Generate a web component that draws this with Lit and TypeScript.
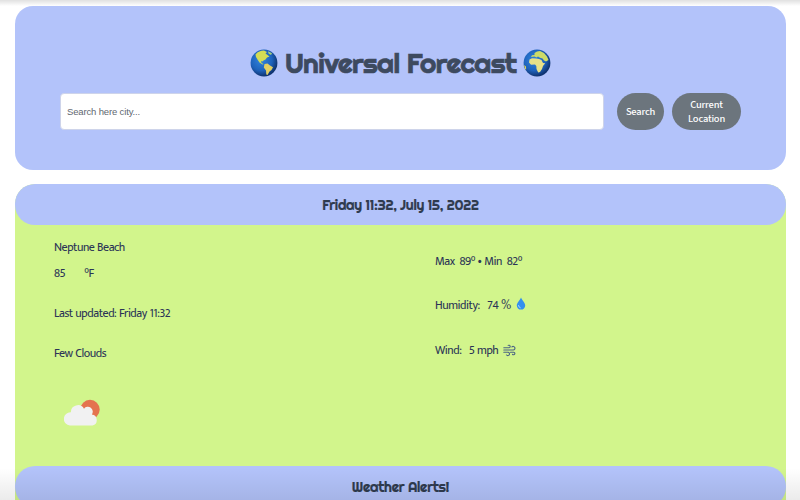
import { LitElement, html, css, svg } from "lit";
import { customElement, property } from "lit/decorators.js";

@customElement("globe-icon")
class GlobeIcon extends LitElement {
  @property() side = "americas";
  static styles = css`
    :host { display: block; width: 28px; height: 28px; flex: none; }
    svg { display: block; }
  `;
  render() {
    const americas = svg`
      <path fill="#d3dc55" d="M5.500 5.500C8 2.500 11 1.500 14 1.600L17 3L15.500 4.500L17.500 6L19.500 7.500L17 8.500L15.500 10.500L13.500 11.500L12.500 12.500L11 12L11.500 14L13.500 15L12.500 15.500L9.500 13.500L7.500 10.500L6 8Z"/>
      <path fill="#e2cf63" d="M14.500 15L17.500 14.500L20 16.500L23 18.200L21.500 21L19.500 22.500L17.500 26L16.300 25.500L16 21.500L13.800 18.500Z"/>
      <path fill="#a5cf7c" d="M18 2.200L22 4.300L21 6L18.500 4.500Z"/>`;
    const africa = svg`
      <path fill="#e8e188" d="M6.500 10.500L9 9.300L13 9.600L16 10L18.500 11L20 14L22.200 14.300L20 17L19 20L17 23L15.200 23.500L13.500 20L13.300 17L12 15.600L8 15.800L6 13.500Z"/>
      <path fill="#cddb68" d="M8 8L9 6.200L11.500 6L11.500 4L14 2.500L17 2L21 4L24 7.500L25.500 11L23 12.500L21 11.500L19.500 9.500L17 8.800L15 7.500L13.500 8.500L11.500 7.500Z"/>
      <path fill="#dfd75c" d="M1 16L3 17.500L3.200 20.500L2.200 20Z"/>`;
    return html`<svg width="28" height="28" viewBox="0 0 28 28">
      <defs><radialGradient id="sea" cx="40%" cy="38%" r="62%">
        <stop offset="0" stop-color="#3285df"/><stop offset=".65" stop-color="#1e62bb"/><stop offset="1" stop-color="#10336f"/>
      </radialGradient></defs>
      <circle cx="14" cy="14" r="13.400" fill="url(#sea)"/>
      ${this.side === "americas" ? americas : africa}
    </svg>`;
  }
}

@customElement("app-root")
class AppRoot extends LitElement {
  static styles = css`
    :host {
      display: block; position: relative; box-sizing: border-box; width: 800px; height: 500px;
      overflow: hidden; padding: 6px 14px 0 15px; background: #fff;
      font-family: Mukta, "Noto Sans", sans-serif; font-size: 12px; letter-spacing: -.48px; word-spacing: .5px; color: #2b3456;
    }
    .shade { position: absolute; left: 0; right: 0; pointer-events: none; }
    .shade.top { top: 0; height: 6px; background: linear-gradient(rgba(0,0,0,.12), rgba(0,0,0,0)); }
    .shade.bottom { bottom: 0; height: 32px; background: linear-gradient(rgba(0,0,0,0), rgba(0,0,0,.08)); }
    .hero { box-sizing: border-box; height: 164px; border-radius: 18px; background: #b3c3fa; padding: 40px 45px 0; }
    .title { display: flex; justify-content: center; align-items: center; gap: 7px; height: 34px; }
    h1, h2 { margin: 0; font-family: Righteous, "Inter", sans-serif; font-weight: 400; white-space: nowrap; word-spacing: 0; }
    h1 { font-size: 28px; line-height: 34px; width: 231px; letter-spacing: -.6px; color: #3d4a5f; -webkit-text-stroke: .7px #3d4a5f; }
    form { display: flex; align-items: center; margin: 12px 0 0; height: 38px; }
    input {
      box-sizing: border-box; width: 544px; height: 37px; border: 1px solid #ced4ea; border-radius: 4px;
      background: #fff; padding: 0 6px; font: 9.500px "Liberation Sans", sans-serif; letter-spacing: -.15px; outline: 0;
    }
    input::placeholder { color: #5f6871; opacity: 1; }
    button {
      box-sizing: border-box; height: 37px; border: 0; border-radius: 19px; padding: 1px 0 0; background: #6c757d;
      color: #fff; font: 500 10.500px/14px "Source Sans 3", "Noto Sans", sans-serif; letter-spacing: -.2px;
    }
    .search { width: 47px; margin-left: 13px; }
    .locate { width: 69px; margin-left: 8px; }
    .weather { margin-top: 14px; height: 320px; border-radius: 20px 20px 0 0; background: #d2f58c; }
    h2 { box-sizing: border-box; height: 41px; border-radius: 20px; background: #b3c3fa; text-align: center; font-size: 14px; letter-spacing: -.27px; line-height: 42px; color: #2f3b4f; -webkit-text-stroke: .2px #2f3b4f; }
    .details { display: grid; grid-template-columns: 381px 1fr; height: 241px; padding-left: 39px; }
    .row { display: flex; align-items: center; height: 16px; white-space: pre; }
    .city { margin-top: 14px; }
    .temp { margin-top: 10px; gap: 19px; }
    .updated, .sky { margin-top: 24px; }
    .range { margin-top: 28px; }
    .humidity { margin-top: 28px; }
    .wind { margin-top: 29px; }
    .cloud { display: block; margin: 38px 0 0 10px; }
    .glyph { margin-left: 5px; }
    .drop { margin-bottom: 3px; }
  `;
  render() {
    return html`
      <section class="hero">
        <div class="title">
          <globe-icon side="americas"></globe-icon>
          <h1>Universal Forecast</h1>
          <globe-icon side="africa"></globe-icon>
        </div>
        <form>
          <input placeholder="Search here city..." />
          <button class="search" type="button">Search</button>
          <button class="locate" type="button">Current<br />Location</button>
        </form>
      </section>
      <section class="weather">
        <h2 class="date">Friday 11:32, July 15, 2022</h2>
        <div class="details">
          <div>
            <div class="row city">Neptune Beach</div>
            <div class="row temp"><span>85</span><span>°F</span></div>
            <div class="row updated">Last updated: Friday 11:32</div>
            <div class="row sky">Few Clouds</div>
            <svg class="cloud" width="38" height="28" viewBox="0 0 38 28">
              <circle cx="26" cy="10.500" r="9.700" fill="#e4734f"/>
              <path fill="#f1f1f2" d="M6 26.500A6.300 6.300 0 0 1 6.900 13.300A7 7 0 0 1 20 9.700A4.800 4.800 0 0 1 27.800 15.500A5.600 5.600 0 0 1 28.500 26.500Z"/>
            </svg>
          </div>
          <div>
            <div class="row range">Max  89° • Min  82°</div>
            <div class="row humidity">Humidity:   74 %<svg class="glyph drop" width="10" height="13" viewBox="0 0 10 13">
              <path fill="#3390ee" d="M5 .5C4 3.500 .8 5.600 .8 8.500A4.200 4.100 0 0 0 9.200 8.500C9.200 5.600 6 3.500 5 .5Z"/>
              <path d="M2.500 8.500Q2.600 10.300 4.300 10.800" fill="none" stroke="#a7d8ff" stroke-linecap="round"/>
            </svg></div>
            <div class="row wind">Wind:   5 mph<svg class="glyph" width="13" height="13" viewBox="0 0 13 13" fill="none" stroke="#4b6584" stroke-width="1.100" stroke-linecap="round">
              <path d="M.8 3.800H6A1.300 1.300 0 1 0 5.200 1.400M.8 6H10.300A1.800 1.800 0 1 0 8.900 2.900M.8 8.200H5A1.700 1.700 0 1 1 3.500 11M7.500 8.200H10.500A1.300 1.300 0 1 1 9.500 10.300"/>
            </svg></div>
          </div>
        </div>
        <h2 class="alerts">Weather Alerts!</h2>
      </section>
      <div class="shade top"></div>
      <div class="shade bottom"></div>
    `;
  }
}
